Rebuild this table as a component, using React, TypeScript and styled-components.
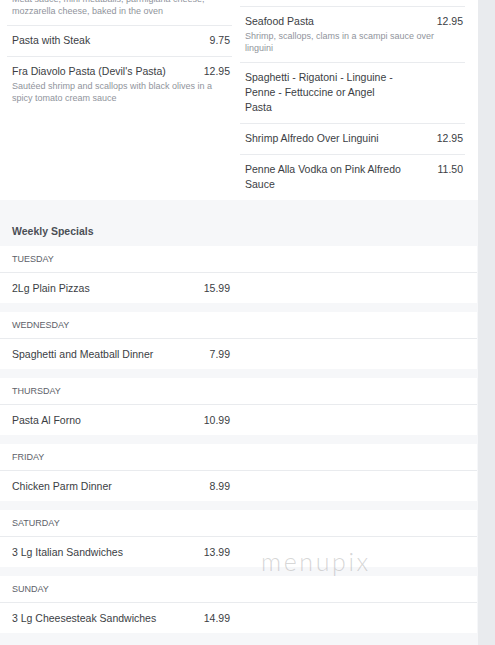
import React from "react";
import styled, { createGlobalStyle } from "styled-components";

const GlobalStyle = createGlobalStyle`
  html, body {
    margin: 0;
    padding: 0;
    background: #e9ebee;
    font-family: "Liberation Sans", Arial, sans-serif;
    overflow: hidden;
  }
`;

const Page = styled.div`
  width: 478px;
  min-height: 645px;
  display: flex;
  flex-direction: column;
  background: #f6f7f9;
`;

const TopSection = styled.section`
  display: flex;
  gap: 8px;
  padding-left: 7px;
  background: #ffffff;
`;

const Column = styled.div<{ $offset: number }>`
  width: 225px;
  display: flex;
  flex-direction: column;
  padding-top: ${(p) => p.$offset}px;
`;

const Item = styled.div<{ $first?: boolean; $shift?: number }>`
  padding: 7px 2px 8px 5px;
  border-top: ${(p) => (p.$first ? "none" : "1px solid #e9ebee")};
  margin-top: ${(p) => p.$shift ?? 0}px;
  ${(p) => (p.$first ? "padding-top: 0;" : "")}
`;

const ItemHead = styled.div`
  display: flex;
  justify-content: space-between;
  align-items: flex-start;
`;

const Name = styled.div`
  width: 159px;
  font-size: 10.5px;
  line-height: 15px;
  color: #3b3e44;
`;

const Price = styled.div`
  font-size: 10.5px;
  line-height: 15px;
  color: #3b3e44;
  text-align: right;
`;

const Desc = styled.div<{ $gap?: number }>`
  margin-top: ${(p) => p.$gap ?? 1}px;
  padding-right: 4px;
  font-size: 9px;
  line-height: 12px;
  color: #90949c;
`;

const Specials = styled.section`
  position: relative;
  flex: 1;
  padding: 24px 0 13px;
  background: #f6f7f9;
`;

const SpecialsTitle = styled.h2`
  margin: 0 0 7px;
  padding-left: 12px;
  font-size: 10.5px;
  line-height: 15px;
  font-weight: bold;
  color: #4b4f56;
`;

const DayList = styled.div`
  display: flex;
  flex-direction: column;
  gap: 9px;
`;

const DayCard = styled.div`
  width: 477px;
  background: #ffffff;
`;

const DayHeader = styled.div`
  height: 26px;
  display: flex;
  align-items: center;
  padding-left: 12px;
  border-bottom: 1px solid #e9ebee;
  font-size: 9px;
  color: #5d6169;
  text-transform: uppercase;
`;

const DayRow = styled.div`
  height: 30px;
  width: 218px;
  display: flex;
  align-items: center;
  justify-content: space-between;
  padding-left: 12px;
`;

const Watermark = styled.div`
  position: absolute;
  left: 261px;
  top: 346px;
  font-family: Lato, "Liberation Sans", sans-serif;
  font-weight: 300;
  font-size: 25px;
  letter-spacing: 2.6px;
  color: rgba(150, 150, 150, 0.38);
  pointer-events: none;
`;

type MenuItem = { name: string; price?: string; desc?: string };

const rightItems: MenuItem[] = [
  {
    name: "Seafood Pasta",
    price: "12.95",
    desc: "Shrimp, scallops, clams in a scampi sauce over linguini",
  },
  { name: "Spaghetti - Rigatoni - Linguine - Penne - Fettuccine or Angel Pasta" },
  { name: "Shrimp Alfredo Over Linguini", price: "12.95" },
  { name: "Penne Alla Vodka on Pink Alfredo Sauce", price: "11.50" },
];

const leftItems: MenuItem[] = [
  { name: "Pasta with Steak", price: "9.75" },
  {
    name: "Fra Diavolo Pasta (Devil's Pasta)",
    price: "12.95",
    desc: "Sautéed shrimp and scallops with black olives in a spicy tomato cream sauce",
  },
];

const specials = [
  { day: "Tuesday", name: "2Lg Plain Pizzas", price: "15.99" },
  { day: "Wednesday", name: "Spaghetti and Meatball Dinner", price: "7.99" },
  { day: "Thursday", name: "Pasta Al Forno", price: "10.99" },
  { day: "Friday", name: "Chicken Parm Dinner", price: "8.99" },
  { day: "Saturday", name: "3 Lg Italian Sandwiches", price: "13.99" },
  { day: "Sunday", name: "3 Lg Cheesesteak Sandwiches", price: "14.99" },
];

const MenuEntry = ({ item }: { item: MenuItem }) => (
  <Item>
    <ItemHead>
      <Name>{item.name}</Name>
      {item.price && <Price>{item.price}</Price>}
    </ItemHead>
    {item.desc && <Desc>{item.desc}</Desc>}
  </Item>
);

export default function App() {
  return (
    <>
      <GlobalStyle />
      <Page>
        <TopSection>
          <Column $offset={0}>
            <Item $first $shift={-7}>
              <Desc $gap={0}>
                Meat sauce, mini meatballs, parmigiana cheese, mozzarella cheese, baked in the oven
              </Desc>
            </Item>
            {leftItems.map((it) => (
              <MenuEntry key={it.name} item={it} />
            ))}
          </Column>
          <Column $offset={6}>
            {rightItems.map((it) => (
              <MenuEntry key={it.name} item={it} />
            ))}
          </Column>
        </TopSection>
        <Specials>
          <SpecialsTitle>Weekly Specials</SpecialsTitle>
          <DayList>
            {specials.map((s) => (
              <DayCard key={s.day}>
                <DayHeader>{s.day}</DayHeader>
                <DayRow>
                  <Name>{s.name}</Name>
                  <Price>{s.price}</Price>
                </DayRow>
              </DayCard>
            ))}
          </DayList>
          <Watermark>menupix</Watermark>
        </Specials>
      </Page>
    </>
  );
}
